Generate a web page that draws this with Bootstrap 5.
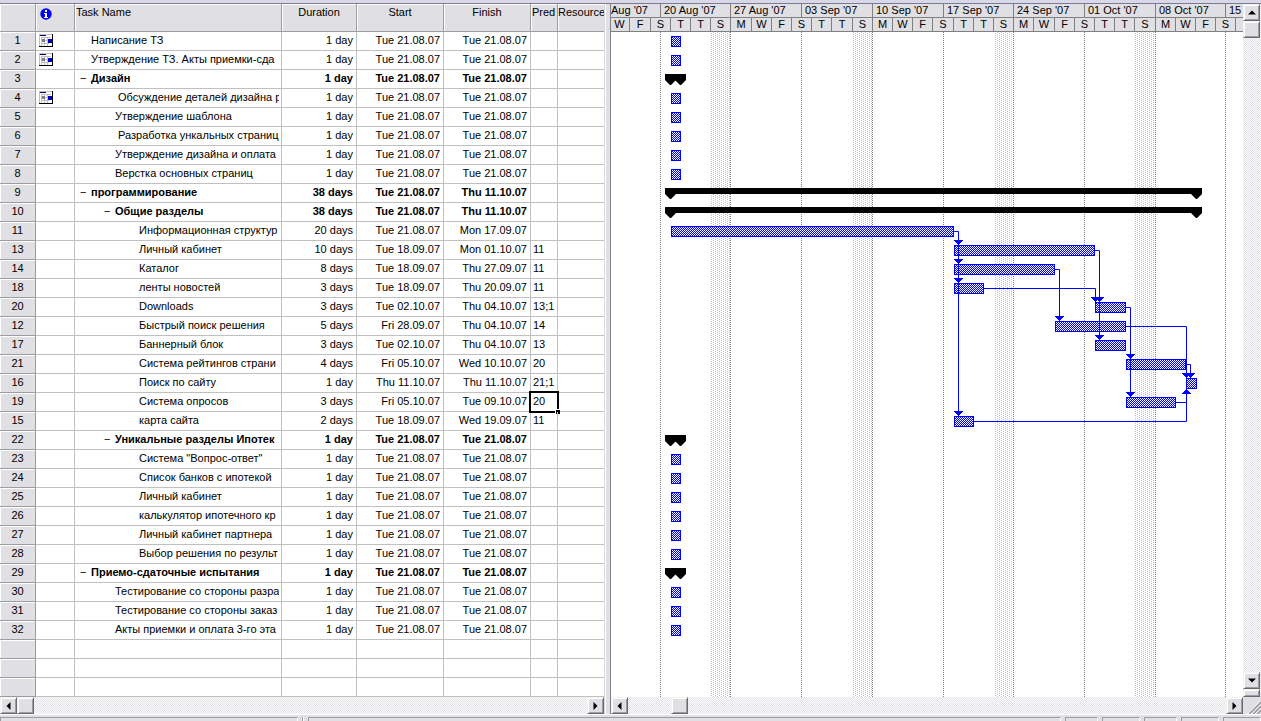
<!DOCTYPE html>
<html lang="ru">
<head>
<meta charset="utf-8">
<meta name="viewport" content="width=device-width, initial-scale=1">
<title>Gantt Chart</title>
<link href="https://cdn.jsdelivr.net/npm/bootstrap@5.3.0/dist/css/bootstrap.min.css" rel="stylesheet">
<style>
  :root { --face: #e0dfe3; --shade: #9d9da1; --rule: #c0c0c0; --ink: #000; --task: #0000ff; }
  body { font: 11px/18px "Liberation Sans", Arial, sans-serif; color: var(--ink); background: #fff; }
  .topstrip { height: 4px; background: #d8d8e8; border-bottom: 1px solid #7b7b93; }
  .sheet-pane { flex: 0 0 604px; }
  .sheet { table-layout: fixed; border-collapse: separate; border-spacing: 0; }
  .sheet th, .sheet td { padding: 0; border-right: 1px solid var(--rule); border-bottom: 1px solid var(--rule); }
  .sheet th:last-child, .sheet td:last-child { border-right: 0; }
  .sheet thead th { height: 28px; background: var(--face); font-weight: 400; vertical-align: top; line-height: 16px;
    border-color: var(--shade); box-shadow: inset 1px 1px #fff; padding: 0 1px; text-align: center; white-space: nowrap; }
  .sheet thead th:last-child { padding: 0; }
  .sheet tbody th { background: var(--face); font-weight: 400; text-align: center; border-color: var(--shade);
    box-shadow: inset 1px 1px #fff; vertical-align: top; line-height: 16px; }
  .sheet td { height: 19px; line-height: 16px; vertical-align: top; }
  .sheet .when { text-align: right; padding-right: 3px; }
  .sheet .before { padding-left: 2px; position: relative; }
  .sheet .summary td { font-weight: 700; }
  .clip { overflow: hidden; white-space: nowrap; height: 18px; }
  .taskcell { margin-right: 2px; padding-left: 5px; }
  .level1 { padding-left: 29px; }
  .level2 { padding-left: 53px; }
  .toggle { flex: 0 0 11px; width: 11px; height: 16px; padding: 0; border: 0; background: none; text-align: left; line-height: 14px; }
  .info { margin: 4px 0 0 3px; }
  .calendar { margin: 2px 0 0 3px; }
  .cursor::before { content: ""; position: absolute; inset: -2px; border: 2px solid #000; }
  .cursor::after { content: ""; position: absolute; right: -3px; bottom: -3px; width: 5px; height: 5px; background: #000; border: 1px solid #fff; border-width: 1px 0 0 1px; }
  .splitter { flex: 0 0 7px; background: var(--face); border-left: 1px solid #d8d8e0; border-right: 1px solid #808088; box-shadow: inset 1px 0 #fff; }
  .scale { background: var(--face); height: 28px; padding-left: 1px; }
  .timeline { margin-left: -22px; }
  .tick { flex: none; height: 14px; line-height: 13px; border-right: 1px solid #808080; border-bottom: 1px solid #808080; white-space: nowrap; overflow: hidden; }
  .week { padding-left: 3px; }
  .week:first-child { padding-left: 21px; }
  .chart { height: 665px; display: block; }
  .track { background: repeating-conic-gradient(#e0dfe3 0 25%, #fff 0 50%) 0 0 / 2px 2px; }
  .hbar { height: 17px; }
  .vbar { flex: 0 0 18px; }
  .btn-scroll { width: 17px; height: 17px; padding: 0; flex: none; border: 1px solid; border-color: #f4f3ee #6b6b6b #6b6b6b #f4f3ee;
    border-radius: 0; background: var(--face); box-shadow: inset 1px 1px #fff, inset -1px -1px var(--shade); display: flex; align-items: center; justify-content: center; }
  .btn-split { height: 8px; }
  .gap-thumb { flex: 0 0 43px; }
  .corner { flex: 0 0 18px; background: var(--face); }
  .status { height: 7px; background: var(--face); border-top: 1px solid #fff; padding-top: 2px; }
  .well { border: 1px solid var(--shade); border-bottom: 0; border-right-color: #fff; flex: none; }
  .s1 { width: 298px; } .s2 { width: 33px; } .s3 { width: 38px; }
  .bar-sep { flex: none; width: 2px; background: var(--shade); border-right: 1px solid #fff; }
</style>
</head>
<body>
<div class="d-flex flex-column min-vh-100 overflow-hidden">
  <div class="topstrip"></div>
  <main class="d-flex">
    <section class="sheet-pane overflow-hidden" aria-label="Tasks">
      <table class="sheet w-100">
        <colgroup><col style="width:36px"><col style="width:39px"><col style="width:207px"><col style="width:75px"><col style="width:87px"><col style="width:87px"><col style="width:27px"><col></colgroup>
        <thead>
          <tr>
            <th aria-label="ID"></th>
            <th aria-label="Indicators"><svg class="info d-block" width="12" height="12" viewBox="0 0 12 12"><circle cx="6" cy="6" r="5.7" fill="#00f"/><path d="M5 2h2v2H5zM4 5h3v4h1v1H4V9h1V6H4z" fill="#fff" shape-rendering="crispEdges"/></svg></th>
            <th class="text-start">Task Name</th><th>Duration</th><th>Start</th><th>Finish</th><th class="text-start">Pred</th>
            <th class="text-start">Resource</th>
          </tr>
        </thead>
        <tbody id="rows"></tbody>
      </table>
      <div class="hbar track d-flex justify-content-between">
        <div class="d-flex">
          <button class="btn-scroll" aria-label="Scroll left"><svg width="5" height="8"><path d="M4.5 0v8L.5 4z"/></svg></button>
          <button class="btn-scroll" aria-label="Position"></button>
        </div>
        <button class="btn-scroll" aria-label="Scroll right"><svg width="5" height="8"><path d="M.5 0v8l4-4z"/></svg></button>
      </div>
    </section>
    <div class="splitter"></div>
    <section class="flex-fill d-flex flex-column overflow-hidden" aria-label="Chart">
      <div class="d-flex flex-fill">
        <div class="flex-fill overflow-hidden">
          <div class="timeline">
            <div class="scale"><div class="d-flex" id="weeks"></div><div class="d-flex text-center" id="days"></div></div>
            <svg class="chart w-100" id="chart">
              <defs>
                <pattern id="fill" width="8" height="2" patternUnits="userSpaceOnUse"><rect width="8" height="2" fill="#ffffff"/><path fill="#0000ff" d="M0 0h1v1H0zM2 0h1v1H2zM4 0h1v1H4zM6 0h1v1H6zM1 1h1v1H1zM3 1h1v1H3zM5 1h1v1H5zM7 1h1v1H7z"/></pattern>
                <pattern id="off" width="4" height="4" patternUnits="userSpaceOnUse"><path fill="#c0c0c0" d="M0 0h1v1H0zM2 1h1v1H2zM0 2h1v1H0zM2 3h1v1H2z"/></pattern>
              </defs>
            </svg>
          </div>
        </div>
        <div class="vbar track d-flex flex-column justify-content-between">
          <div>
            <button class="btn-scroll" aria-label="Scroll up"><svg width="8" height="5"><path d="M0 4.5h8L4 .5z"/></svg></button>
            <button class="btn-scroll" aria-label="Position"></button>
          </div>
          <div>
            <button class="btn-scroll" aria-label="Scroll down"><svg width="8" height="5"><path d="M0 .5h8l-4 4z"/></svg></button>
            <button class="btn-scroll btn-split" aria-label="Split"></button>
          </div>
        </div>
      </div>
      <div class="d-flex">
        <div class="hbar track d-flex flex-fill justify-content-between">
          <div class="d-flex">
            <button class="btn-scroll" aria-label="Scroll left"><svg width="5" height="8"><path d="M4.5 0v8L.5 4z"/></svg></button>
            <span class="gap-thumb"></span>
            <button class="btn-scroll" aria-label="Position"></button>
          </div>
          <button class="btn-scroll" aria-label="Scroll right"><svg width="5" height="8"><path d="M.5 0v8l4-4z"/></svg></button>
        </div>
        <div class="corner"><svg class="d-block" width="18" height="17"><path d="M6 17 18 5M10 17l8-8M14 17l4-4" stroke="#9d9da1" stroke-width="2"/><path d="M4.500 17 18 3.500M8.500 17 18 7.500M12.500 17 18 11.500" stroke="#fff"/></svg></div>
      </div>
    </section>
  </main>
  <footer class="status d-flex gap-1">
    <span class="well s1"></span><span class="bar-sep"></span><span class="well flex-fill"></span><span class="well s2"></span><span class="well s3"></span><span class="well s2"></span><span class="well s3"></span><span class="well s3"></span>
  </footer>
</div>
<script src="https://cdn.jsdelivr.net/npm/bootstrap@5.3.0/dist/js/bootstrap.bundle.min.js"></script>
<script>
  // id, level, name, duration, start, finish, predecessors, first day, end day (counted from 20 Aug), flags
  const T = 'Tue 21.08.07';
  const tasks = [
    [1, 0, 'Написание ТЗ', '1 day', T, T, '', 1, 2, 'c'],
    [2, 0, 'Утверждение ТЗ. Акты приемки-сда', '1 day', T, T, '', 1, 2, 'c'],
    [3, 0, 'Дизайн', '1 day', T, T, '', 1, 2, 's'],
    [4, 1, '\u00a0Обсуждение деталей дизайна р', '1 day', T, T, '', 1, 2, 'c'],
    [5, 1, 'Утверждение шаблона', '1 day', T, T, '', 1, 2, ''],
    [6, 1, '\u00a0Разработка ункальных страниц', '1 day', T, T, '', 1, 2, ''],
    [7, 1, 'Утверждение дизайна и оплата', '1 day', T, T, '', 1, 2, ''],
    [8, 1, 'Верстка основных страниц', '1 day', T, T, '', 1, 2, ''],
    [9, 0, 'программирование', '38 days', T, 'Thu 11.10.07', '', 1, 53, 's'],
    [10, 1, 'Общие разделы', '38 days', T, 'Thu 11.10.07', '', 1, 53, 's'],
    [11, 2, 'Информационная структур', '20 days', T, 'Mon 17.09.07', '', 1, 29, ''],
    [13, 2, 'Личный кабинет', '10 days', 'Tue 18.09.07', 'Mon 01.10.07', '11', 29, 43, ''],
    [14, 2, 'Каталог', '8 days', 'Tue 18.09.07', 'Thu 27.09.07', '11', 29, 39, ''],
    [18, 2, 'ленты новостей', '3 days', 'Tue 18.09.07', 'Thu 20.09.07', '11', 29, 32, ''],
    [20, 2, 'Downloads', '3 days', 'Tue 02.10.07', 'Thu 04.10.07', '13;1', 43, 46, ''],
    [12, 2, 'Быстрый поиск решения', '5 days', 'Fri 28.09.07', 'Thu 04.10.07', '14', 39, 46, ''],
    [17, 2, 'Баннерный блок', '3 days', 'Tue 02.10.07', 'Thu 04.10.07', '13', 43, 46, ''],
    [21, 2, 'Система рейтингов страни', '4 days', 'Fri 05.10.07', 'Wed 10.10.07', '20', 46, 52, ''],
    [16, 2, 'Поиск по сайту', '1 day', 'Thu 11.10.07', 'Thu 11.10.07', '21;1', 52, 53, ''],
    [19, 2, 'Система опросов', '3 days', 'Fri 05.10.07', 'Tue 09.10.07', '20', 46, 51, 'x'],
    [15, 2, 'карта сайта', '2 days', 'Tue 18.09.07', 'Wed 19.09.07', '11', 29, 31, ''],
    [22, 1, 'Уникальные разделы Ипотек', '1 day', T, T, '', 1, 2, 's'],
    [23, 2, 'Система "Вопрос-ответ"', '1 day', T, T, '', 1, 2, ''],
    [24, 2, 'Список банков с ипотекой', '1 day', T, T, '', 1, 2, ''],
    [25, 2, 'Личный кабинет', '1 day', T, T, '', 1, 2, ''],
    [26, 2, 'калькулятор ипотечного кр', '1 day', T, T, '', 1, 2, ''],
    [27, 2, 'Личный кабинет партнера', '1 day', T, T, '', 1, 2, ''],
    [28, 2, 'Выбор решения по результ', '1 day', T, T, '', 1, 2, ''],
    [29, 0, 'Приемо-сдаточные испытания', '1 day', T, T, '', 1, 2, 's'],
    [30, 1, 'Тестирование со стороны разра', '1 day', T, T, '', 1, 2, ''],
    [31, 1, 'Тестирование со стороны заказ', '1 day', T, T, '', 1, 2, ''],
    [32, 1, 'Акты приемки и оплата 3-го эта', '1 day', T, T, '', 1, 2, '']
  ];
  const calendar = '<svg class="calendar d-block" width="14" height="13"><path fill="#fff" d="M0 0h14v13H0z"/><path fill="#c0c0c0" d="M0 0h14v1H0zM0 1h1v12H0zM2 3h10v1H2zM2 6h8v1H2zM2 9h8v1H2zM2 4h1v8H2zM5 4h1v8H5zM8 4h1v8H8z"/><path fill="#808080" d="M3 5h3v3H3z"/><path fill="#000" d="M13 0h1v13h-1zM0 12h14v1H0z"/><path fill="#00007f" d="M1 1h6v1H1z"/><path fill="#00c" d="M9 5h4v4H9z"/></svg>';
  let html = '';
  for (const [id, level, name, dur, start, finish, pred, , , flag] of tasks) {
    const sum = flag === 's';
    html += `<tr class="${sum ? 'summary' : ''}"><th scope="row">${id}</th><td>${flag === 'c' ? calendar : ''}</td>
      <td><div class="clip taskcell level${level} d-flex">${sum ? '<button class="toggle" aria-label="Collapse">−</button>' : '<span class="toggle"></span>'}<span>${name}</span></div></td>
      <td class="when">${dur}</td><td class="when">${start}</td><td class="when">${finish}</td>
      <td class="before ${flag === 'x' ? 'cursor' : ''}">${pred}</td><td></td></tr>`;
  }
  for (let i = 0; i < 3; i++) html += '<tr><th></th>' + '<td></td>'.repeat(7) + '</tr>';
  document.getElementById('rows').innerHTML = html;

  // Time scale: the strip begins one week before 20 Aug, partly scrolled out of view.
  const pos = d => Math.round((d + 7) * 10.1);
  const weeks = ["Aug '07", "20 Aug '07", "27 Aug '07", "03 Sep '07", "10 Sep '07", "17 Sep '07", "24 Sep '07", "01 Oct '07", "08 Oct '07", "15"];
  document.getElementById('weeks').innerHTML = weeks.map((w, i) =>
    `<div class="tick week" style="width:${pos(i * 7) - pos(i * 7 - 7)}px">${w}</div>`).join('');
  let days = '';
  for (let d = -7, i = 0; d < 59; d += 2, i++)
    days += `<div class="tick" style="width:${pos(d + 2) - pos(d)}px">${d > -7 && d < 57 ? 'MWFSTTS'[i % 7] : ''}</div>`;
  document.getElementById('days').innerHTML = days;

  // Chart
  const x = d => Math.round(71.7 + d * 10.11), rowTop = i => i * 19 + 4;
  let g = '';
  for (let d = 5; d < 60; d += 14) g += `<rect x="${pos(d) + 1}" width="20" height="665" fill="url(#off)"/>`;
  for (let d = 0; d < 64; d += 7) g += `<path d="M${pos(d) + .5} 0V665" stroke="#808080" stroke-dasharray="1 1"/>`;
  tasks.forEach((t, i) => {
    const a = x(t[7]), b = x(t[8]), y = rowTop(i);
    if (t[9] === 's')
      g += `<path d="M${a - 6} ${y}H${b + 5}v6l-5 5h-1l-5-5H${a + 5}l-5 5h-1l-5-5z"/>`;
    else
      g += `<rect x="${a}" y="${y}" width="${b - a}" height="11" fill="url(#fill)"/><rect x="${a + .5}" y="${y + .5}" width="${b - a - 1}" height="10" fill="none" stroke="#0000ff"/>`;
  });
  // Links: out of the finish of one bar, then down (or up) to another row
  const down = (cx, i) => `<path fill="#00f" d="M${cx - 4} ${rowTop(i) - 5}h9v1h-1v1h-1v1h-1v1h-1v1h-1v-1h-1v-1h-1v-1h-1v-1h-1z"/>`;
  const link = (from, cx, yEnd) => `<path fill="none" stroke="#00f" d="M${x(tasks[from][8])} ${rowTop(from) + 5.5}H${cx + .5}V${yEnd}"/>`;
  const after = (i) => x(tasks[i][8]) + 4, end = x(52);
  g += link(10, after(10), rowTop(20)) + [11, 12, 13, 20].map(i => down(after(10), i)).join('');
  g += link(11, after(11), rowTop(16)) + down(after(11), 14) + down(after(11), 16);
  g += link(12, after(12), rowTop(15)) + down(after(12), 15);
  g += link(13, x(43), rowTop(14)) + down(x(43), 14);
  g += link(14, after(14), rowTop(19)) + down(after(14), 17) + down(after(14), 19);
  g += link(15, end, rowTop(18)) + down(end, 18);
  g += link(17, after(17), rowTop(18)) + down(after(17), 18);
  g += link(19, end, rowTop(19) + 6) + link(20, end, rowTop(18) + 11);
  g += `<path fill="#00f" d="M${end} ${rowTop(18) + 11}h1v1h1v1h1v1h1v1h1v1h-9v-1h1v-1h1v-1h1v-1h1z"/>`;
  document.getElementById('chart').insertAdjacentHTML('beforeend', g);
</script>
</body>
</html>
